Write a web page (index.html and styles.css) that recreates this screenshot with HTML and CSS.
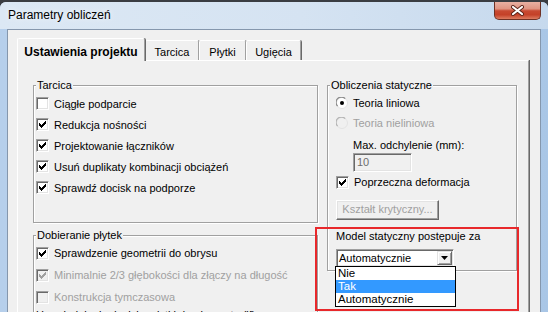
FILE: index.html
```html
<!DOCTYPE html>
<html>
<head>
<meta charset="utf-8">
<link rel="stylesheet" href="styles.css">
</head>
<body>
<div class="window">
  <div class="titlebar">
    <span class="title">Parametry obliczeń</span>
    <div class="close">
      <svg width="13" height="11" viewBox="0 0 13 11">
        <path d="M2 2 L11 9 M11 2 L2 9" stroke="#5a2318" stroke-width="4" stroke-linecap="round"/>
        <path d="M2 2 L11 9 M11 2 L2 9" stroke="#fff" stroke-width="2.2" stroke-linecap="round"/>
      </svg>
    </div>
  </div>

  <div class="client">
    <div class="tabs">
      <div class="tab selected">Ustawienia projektu</div>
      <div class="tab w-tarcica">Tarcica</div>
      <div class="tab w-plytki">Płytki</div>
      <div class="tab w-ugiecia">Ugięcia</div>
    </div>

    <div class="panel">
      <div class="left-col">
        <!-- Tarcica -->
        <div class="group tarcica">
          <div class="group-title">Tarcica</div>
          <div class="row first"><span class="cb"></span>Ciągłe podparcie</div>
          <div class="row"><span class="cb"><svg width="9" height="9"><path d="M1 3h1v1h1v1h1v-1h1v-1h1v-1h1v-1h1v3h-1v1h-1v1h-1v1h-1v1h-1v-1h-1v-1h-1z"/></svg></span>Redukcja nośności</div>
          <div class="row"><span class="cb"><svg width="9" height="9"><path d="M1 3h1v1h1v1h1v-1h1v-1h1v-1h1v-1h1v3h-1v1h-1v1h-1v1h-1v1h-1v-1h-1v-1h-1z"/></svg></span>Projektowanie łączników</div>
          <div class="row"><span class="cb"><svg width="9" height="9"><path d="M1 3h1v1h1v1h1v-1h1v-1h1v-1h1v-1h1v3h-1v1h-1v1h-1v1h-1v1h-1v-1h-1v-1h-1z"/></svg></span>Usuń duplikaty kombinacji obciążeń</div>
          <div class="row"><span class="cb"><svg width="9" height="9"><path d="M1 3h1v1h1v1h1v-1h1v-1h1v-1h1v-1h1v3h-1v1h-1v1h-1v1h-1v1h-1v-1h-1v-1h-1z"/></svg></span>Sprawdź docisk na podporze</div>
        </div>

        <!-- Dobieranie płytek -->
        <div class="group dobieranie">
          <div class="group-title">Dobieranie płytek</div>
          <div class="row tall"><span class="cb"><svg width="9" height="9"><path d="M1 3h1v1h1v1h1v-1h1v-1h1v-1h1v-1h1v3h-1v1h-1v1h-1v1h-1v1h-1v-1h-1v-1h-1z"/></svg></span>Sprawdzenie geometrii do obrysu</div>
          <div class="row tall disabled"><span class="cb"><svg width="9" height="9"><path d="M1 3h1v1h1v1h1v-1h1v-1h1v-1h1v-1h1v3h-1v1h-1v1h-1v1h-1v1h-1v-1h-1v-1h-1z"/></svg></span>Minimalnie 2/3 głębokości dla złączy na długość</div>
          <div class="row tall disabled"><span class="cb"></span>Konstrukcja tymczasowa</div>
          <div class="plain">Uwzględnianie docisku płytki do elementu (lf)</div>
        </div>
      </div>

      <!-- Obliczenia statyczne -->
      <div class="group oblicz">
        <div class="group-title">Obliczenia statyczne</div>
        <div class="rrow first">
          <svg class="radio" width="12" height="12" viewBox="0 0 12 12">
            <circle cx="6" cy="6" r="5.5" fill="#fff" stroke="#e3e3e3"/>
            <path d="M1.6 9.2 A5 5 0 0 1 9.2 1.6" fill="none" stroke="#8a8a8a" stroke-width="1.2"/>
            <circle cx="6" cy="6" r="2" fill="#000"/>
          </svg>
          Teoria liniowa
        </div>
        <div class="rrow disabled">
          <svg class="radio" width="12" height="12" viewBox="0 0 12 12">
            <circle cx="6" cy="6" r="5.5" fill="#f0f0f0" stroke="#e3e3e3"/>
            <path d="M1.6 9.2 A5 5 0 0 1 9.2 1.6" fill="none" stroke="#b4b4b4" stroke-width="1.2"/>
          </svg>
          Teoria nieliniowa
        </div>
        <div class="max-label">Max. odchylenie (mm):</div>
        <div class="textbox">10</div>
        <div class="rrow cbrow"><span class="cb"><svg width="9" height="9"><path d="M1 3h1v1h1v1h1v-1h1v-1h1v-1h1v-1h1v3h-1v1h-1v1h-1v1h-1v1h-1v-1h-1v-1h-1z"/></svg></span>Poprzeczna deformacja</div>
        <div class="btn">Kształt krytyczny...</div>
        <div class="model-label">Model statyczny postępuje za</div>
        <div class="combo">
          <span class="combo-text">Automatycznie</span>
          <span class="arrow"><svg width="7" height="4"><path d="M0 0h7l-3.5 4z"/></svg></span>
          <div class="droplist">
            <div class="item">Nie</div>
            <div class="item active">Tak</div>
            <div class="item">Automatycznie</div>
          </div>
        </div>
      </div>

      <div class="highlight"></div>
    </div>
  </div>
</div>
</body>
</html>
```

FILE: styles.css
```css
* {
	box-sizing: border-box;
}
html, body {
	margin: 0;
}
body {
	width: 548px;
	height: 312px;
	overflow: hidden;
	background: #3a3d42;
	font-family: "Liberation Sans", Arial, sans-serif;
	font-size: 11px;
	color: #000;
}

/* window frame */
.window {
	margin-top: 2px;
	height: 310px;
	display: flex;
	flex-direction: column;
	padding: 0 7px;
	border-radius: 6px 6px 0 0;
	background: linear-gradient(90deg, #b6cfeb, #bcd3ec 50%, #a9c6e6);
}
.titlebar {
	height: 27px;
	margin: 0 -7px;
	padding: 0 7px 0 8px;
	display: flex;
	align-items: flex-start;
	border-radius: 6px 6px 0 0;
	background: linear-gradient(90deg, #dce8f4, #d5e3f2 55%, #c6d9ed);
}
.title {
	margin-top: 6px;
	font-size: 12px;
	line-height: 15px;
	color: #000;
	text-shadow: 0 0 6px #fff;
}
.close {
	margin-left: auto;
	width: 47px;
	height: 18px;
	border: 1px solid #6e3124;
	border-top: none;
	border-radius: 0 0 5px 5px;
	display: flex;
	align-items: center;
	justify-content: center;
	background: linear-gradient(180deg, #e8b0a2 0%, #df9482 40%, #c84a32 52%, #c44128 75%, #dd7c60 100%);
}

/* client area */
.client {
	flex: 1;
	display: flex;
	flex-direction: column;
	border: 1px solid #8597ad;
	border-bottom: none;
	background: #f0f0f0;
	min-height: 0;
}

.tabs {
	display: flex;
	align-items: flex-end;
	margin-left: 9px;
	padding-top: 8px;
}
.tab {
	height: 20px;
	padding-top: 4px;
	line-height: 14px;
	text-align: center;
	border-top: 1px solid #fff;
	border-left: 1px solid #fff;
	border-right: 1px solid #a0a0a0;
	box-shadow: 1px 0 0 #696969;
	border-radius: 2px 2px 0 0;
}
.tab.selected {
	width: 128px;
	height: 23px;
	padding-top: 6px;
	margin-bottom: -1px;
	font-size: 12px;
	font-weight: bold;
	background: #f0f0f0;
	position: relative;
	z-index: 1;
}
.w-tarcica { width: 54px; }
.w-plytki { width: 47px; }
.w-ugiecia { width: 55px; }

.panel {
	flex: 1;
	margin: 0 11px 0 9px;
	padding: 24px 0 0 15px;
	border-top: 1px solid #fff;
	border-left: 1px solid #fff;
	border-right: 1px solid #a0a0a0;
	box-shadow: 1px 0 0 #696969;
	display: grid;
	grid-template-columns: 285px 190px;
	column-gap: 9px;
	align-items: start;
	position: relative;
}

.left-col {
	display: flex;
	flex-direction: column;
	gap: 12px;
}

/* etched group boxes */
.group {
	display: flex;
	flex-direction: column;
	padding-left: 2px;
	border: 1px solid #a0a0a0;
	box-shadow: inset 1px 1px 0 #fff, 1px 1px 0 #fff;
}
.group-title {
	align-self: flex-start;
	margin-top: -7px;
	padding: 0 1px;
	line-height: 13px;
	background: #f0f0f0;
}
.tarcica {
	height: 138px;
}
.dobieranie {
	height: 110px;
}
.oblicz {
	height: 186px;
	padding-left: 8px;
}
.oblicz .group-title {
	margin-left: -6px;
}

.row {
	display: flex;
	align-items: center;
	gap: 5px;
	height: 21px;
}
.row.first {
	margin-top: 1px;
}
.row.tall {
	height: 22px;
}
.disabled {
	color: #a0a0a0;
}
.plain {
	margin-top: 1px;
	line-height: 13px;
}

/* checkbox */
.cb {
	width: 13px;
	height: 13px;
	flex: none;
	padding: 1px;
	border: 1px solid;
	border-color: #a0a0a0 #fff #fff #a0a0a0;
	box-shadow: inset 1px 1px 0 #696969, inset -1px -1px 0 #e3e3e3;
	background: #fff;
}
.cb svg {
	display: block;
	fill: #000;
}
.disabled .cb {
	background: #f0f0f0;
}
.disabled .cb svg {
	fill: #a0a0a0;
}

/* right group contents */
.rrow {
	display: flex;
	align-items: center;
	gap: 5px;
	height: 20px;
}
.rrow.first {
	margin-top: 1px;
}
.radio {
	flex: none;
}
.max-label {
	margin: 6px 0 0 17px;
	line-height: 13px;
}
.textbox {
	width: 59px;
	height: 19px;
	margin: 1px 0 0 17px;
	padding: 2px 0 0 3px;
	line-height: 13px;
	color: #6d6d6d;
	border: 1px solid;
	border-color: #a0a0a0 #fff #fff #a0a0a0;
	box-shadow: inset 1px 1px 0 #696969, inset -1px -1px 0 #e3e3e3;
	background: #f0f0f0;
}
.btn {
	width: 103px;
	height: 20px;
	margin-top: 8px;
	line-height: 17px;
	text-align: center;
	color: #a0a0a0;
	border: 1px solid;
	border-color: #fff #696969 #696969 #fff;
	box-shadow: inset -1px -1px 0 #a0a0a0, inset 1px 1px 0 #e3e3e3;
	background: #f0f0f0;
}
.model-label {
	margin-top: 10px;
	line-height: 13px;
}

/* combo box and its open list */
.combo {
	width: 118px;
	height: 18px;
	margin-top: 6px;
	padding: 1px;
	display: flex;
	border: 1px solid;
	border-color: #a0a0a0 #fff #fff #a0a0a0;
	box-shadow: inset 1px 1px 0 #696969, inset -1px -1px 0 #e3e3e3;
	background: #fff;
	position: relative;
}
.combo-text {
	flex: 1;
	padding-left: 1px;
	line-height: 14px;
}
.arrow {
	width: 15px;
	height: 14px;
	display: flex;
	align-items: center;
	justify-content: center;
	border: 1px solid;
	border-color: #e3e3e3 #696969 #696969 #e3e3e3;
	box-shadow: inset 1px 1px 0 #fff, inset -1px -1px 0 #a0a0a0;
	background: #f0f0f0;
}
.arrow svg {
	display: block;
	fill: #000;
}
.droplist {
	position: absolute;
	top: 16px;
	left: -2px;
	width: 121px;
	border: 1px solid #000;
	background: #fff;
	z-index: 2;
}
.item {
	height: 13px;
	line-height: 13px;
	padding-left: 2px;
	font-size: 11.5px;
}
.item.active {
	background: #3399ff;
	color: #fff;
}

/* red annotation frame */
.highlight {
	position: absolute;
	left: 297px;
	top: 166px;
	width: 204px;
	height: 84px;
	border: 2px solid #e8282b;
	pointer-events: none;
}
```
